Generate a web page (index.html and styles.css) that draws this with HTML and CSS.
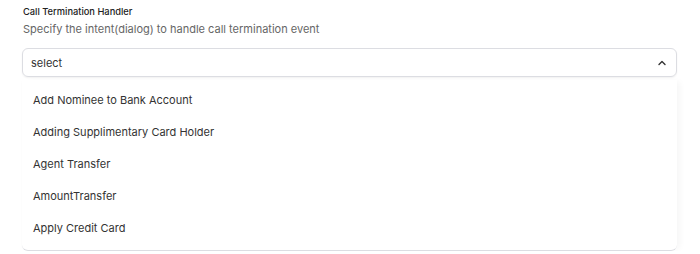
FILE: index.html
```html
<!DOCTYPE html>
<html lang="en">
<head>
	<meta charset="UTF-8">
	<title>Call Termination Handler</title>
	<link rel="stylesheet" href="styles.css">
</head>
<body>
<div class="field">
	<div class="field-label">Call Termination Handler</div>
	<div class="field-help">Specify the intent(dialog) to handle call termination event</div>
	<div class="select">
		<div class="select-box">
			<span class="select-value">select</span>
			<svg class="caret" width="8" height="6" viewBox="0 0 8 6"><path d="M1 4.5 L4 1.5 L7 4.5" fill="none" stroke="#333" stroke-width="1.4" stroke-linecap="round" stroke-linejoin="round"/></svg>
		</div>
		<ul class="menu">
			<li>Add Nominee to Bank Account</li>
			<li>Adding Supplimentary Card Holder</li>
			<li>Agent Transfer</li>
			<li>AmountTransfer</li>
			<li>Apply Credit Card</li>
		</ul>
	</div>
</div>
</body>
</html>
```

FILE: styles.css
```css
body{
	margin: 0;
	background: #fff;
	font-family: Inter, "Liberation Sans", sans-serif;
	color: #333;
}
ul{
	margin: 0;
	padding: 0;
	list-style: none;
}
.field{
	padding: 6px 23px 0 22px;
}
.field-label{
	font-size: 9.3px;
	line-height: 12px;
	font-weight: 500;
	color: #222;
	padding-left: 1px;
}
.field-help{
	font-size: 11px;
	line-height: 18px;
	color: #666;
	margin-top: 2px;
	padding-left: 1px;
}
.select{
	margin-top: 10px;
}
.select-box{
	display: flex;
	align-items: center;
	justify-content: space-between;
	height: 27px;
	padding: 0 10px 0 8px;
	border: 1px solid #dcdde2;
	border-radius: 6px;
	box-shadow: 0 1px 2px rgba(0,0,0,0.06);
	font-size: 11px;
	color: #333;
}
.caret{
	display: block;
}
.menu{
	margin-top: 3px;
	padding: 4px 0 6px;
	border-bottom: 1px solid #dcdde2;
	border-radius: 0 0 6px 6px;
	box-shadow: 5px 0 6px -2px rgba(0,0,0,0.04), -1px 0 3px -2px rgba(0,0,0,0.08);
}
.menu li{
	height: 32px;
	line-height: 32px;
	padding-left: 11px;
	font-size: 11px;
	color: #333;
}
```
